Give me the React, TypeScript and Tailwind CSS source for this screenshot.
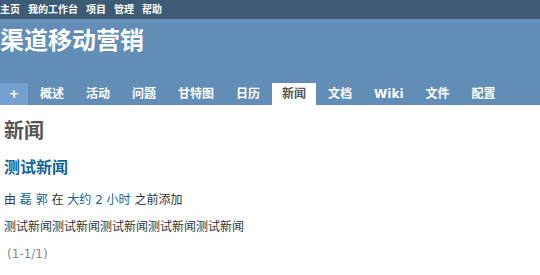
const font = '[font-family:"DejaVu_Sans","Noto_Sans_CJK_SC",sans-serif]';

const tabs = ['概述', '活动', '问题', '甘特图', '日历', '新闻', '文档', 'Wiki', '文件', '配置'];

export default function App() {
    return (
        <div className={`w-[540px] h-[275px] overflow-hidden bg-white ${font}`}>
            <div className="flex h-[19px] items-center gap-[8px] bg-[#3e5b76] text-[10px] font-bold text-white">
                <span>主页</span>
                <span>我的工作台</span>
                <span>项目</span>
                <span>管理</span>
                <span>帮助</span>
            </div>

            <div className="bg-[#628db6] border-t-[3px] border-[#6993ba]">
                <h1 className="pt-[5px] text-[24px] leading-[28px] font-bold text-white">
                    渠道移动营销
                </h1>
                <ul className="mt-[28px] flex gap-[2px] text-[12px] leading-[22px] font-bold">
                    <li className="w-[28px] bg-[#759fcf] text-center text-white">+</li>
                    {tabs.map((t) =>
                        t === '新闻' ? (
                            <li key={t} className="bg-white px-[10px] text-[#555]">
                                {t}
                            </li>
                        ) : (
                            <li key={t} className="px-[10px] text-white">
                                {t}
                            </li>
                        ),
                    )}
                </ul>
            </div>

            <div className="px-[4px]">
                <h2 className="pt-[13px] text-[20px] leading-[26px] font-bold text-[#555]">新闻</h2>
                <h3 className="mt-[14px] text-[16px] leading-[20px] font-bold text-[#116699]">测试新闻</h3>
                <p className="mt-[14px] text-[12px] leading-[16px] text-[#333]">
                    由 <span className="text-[#116699]">磊 郭</span> 在{' '}
                    <span className="text-[#116699]">大约 2 小时</span> 之前添加
                </p>
                <p className="mt-[11px] text-[12px] leading-[16px] text-[#333]">
                    测试新闻测试新闻测试新闻测试新闻测试新闻
                </p>
                <p className="mt-[11px] pl-[3px] text-[12px] leading-[16px] text-[#888]">(1-1/1)</p>
            </div>
        </div>
    );
}
